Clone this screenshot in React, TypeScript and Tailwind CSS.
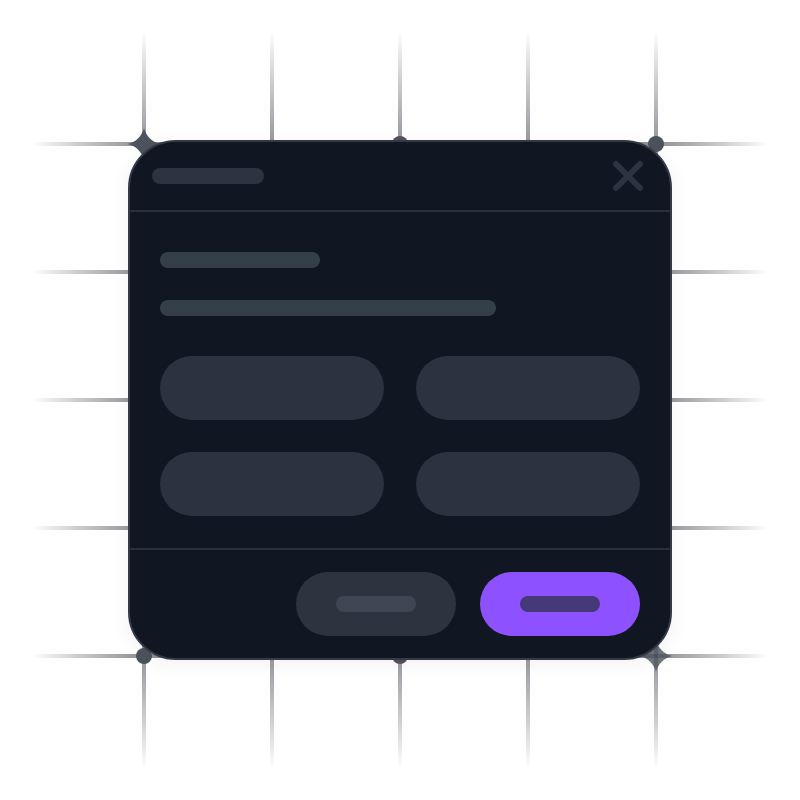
import React from 'react';

const LINES = [144, 272, 400, 528, 656];

const DOTS = [
  { cx: 656, cy: 144 },
  { cx: 144, cy: 656 },
  { cx: 400, cy: 144 },
  { cx: 400, cy: 656 }
];

// Four-pointed star centred on the origin
const STAR = 'M0 -16C2 -8 8 -2 16 0C8 2 2 8 0 16C-2 8 -8 2 -16 0C-8 -2 -2 -8 0 -16Z';

const GridBackdrop: React.FC = () => (
  <svg
    viewBox="0 0 800 800"
    className="absolute top-1/2 left-1/2 size-[800px] max-w-none -translate-1/2"
    fill="none"
    aria-hidden="true"
  >
    <defs>
      <linearGradient id="fade-x" gradientUnits="userSpaceOnUse" x1="32" y1="0" x2="768" y2="0">
        <stop offset="0" stopColor="#000" stopOpacity="0" />
        <stop offset="0.15" stopColor="#1f2230" stopOpacity="0.5" />
        <stop offset="0.85" stopColor="#1f2230" stopOpacity="0.5" />
        <stop offset="1" stopColor="#000" stopOpacity="0" />
      </linearGradient>
      <linearGradient id="fade-y" gradientUnits="userSpaceOnUse" x1="0" y1="32" x2="0" y2="768">
        <stop offset="0" stopColor="#000" stopOpacity="0" />
        <stop offset="0.15" stopColor="#1f2230" stopOpacity="0.46" />
        <stop offset="0.85" stopColor="#1f2230" stopOpacity="0.46" />
        <stop offset="1" stopColor="#000" stopOpacity="0" />
      </linearGradient>
    </defs>
    {LINES.map(p => (
      <g key={p}>
        <rect x="32" y={p - 2} width="736" height="4" fill="url(#fade-x)" />
        <rect x={p - 2} y="32" width="4" height="736" fill="url(#fade-y)" />
      </g>
    ))}
    <path d={STAR} transform="translate(144 144)" fill="#4d525d" />
    <path d={STAR} transform="translate(656 656)" fill="#4d525d" fillOpacity="0.8" />
    {DOTS.map(dot => (
      <circle key={`${dot.cx}-${dot.cy}`} cx={dot.cx} cy={dot.cy} r="8" fill="#4d525d" />
    ))}
  </svg>
);

const FIELDS = ['First field', 'Second field', 'Third field', 'Fourth field'];

const App: React.FC = () => {
  return (
    <main className="relative flex min-h-screen items-center justify-center overflow-hidden bg-white font-['Inter',sans-serif]">
      <GridBackdrop />

      <div
        role="dialog"
        aria-label="Dialog"
        className="relative w-full max-w-[544px] overflow-hidden rounded-[48px] border-2 border-[#343944] bg-[#111722] shadow-[0_4px_20px_rgba(0,0,0,0.06)]"
      >
        {/* Header */}
        <div className="flex items-center justify-between border-b-2 border-[#29303b] py-[18px] pr-[26px] pl-[22px]">
          <div className="h-4 w-28 rounded-full bg-[#2b3440]" />
          <button type="button" aria-label="Close" className="size-8 text-[#2b3440]">
            <svg viewBox="0 0 32 32" fill="none" stroke="currentColor" strokeWidth="6" strokeLinecap="round">
              <path d="M4 4L28 28M28 4L4 28" />
            </svg>
          </button>
        </div>

        {/* Body */}
        <div className="px-[30px] pt-10 pb-8">
          <div className="h-4 w-40 rounded-full bg-[#353f4a]" />
          <div className="mt-8 h-4 w-[70%] rounded-full bg-[#353f4a]" />
          <div className="mt-10 grid grid-cols-2 gap-8">
            {FIELDS.map(field => (
              <input
                key={field}
                type="text"
                aria-label={field}
                className="h-16 w-full min-w-0 rounded-full bg-[#2c3340] px-6 text-gray-300 outline-none"
              />
            ))}
          </div>
        </div>

        {/* Footer */}
        <div className="flex justify-end gap-6 border-t-2 border-[#29303b] px-[30px] py-[22px]">
          <button type="button" aria-label="Cancel" className="flex h-16 w-40 items-center justify-center rounded-full bg-[#2c3440]">
            <span className="h-4 w-20 rounded-full bg-[#3e4753]" />
          </button>
          <button type="button" aria-label="Confirm" className="flex h-16 w-40 items-center justify-center rounded-full bg-[#8e51ff]">
            <span className="h-4 w-20 rounded-full bg-[#46397a]" />
          </button>
        </div>
      </div>
    </main>
  );
};

export default App;
